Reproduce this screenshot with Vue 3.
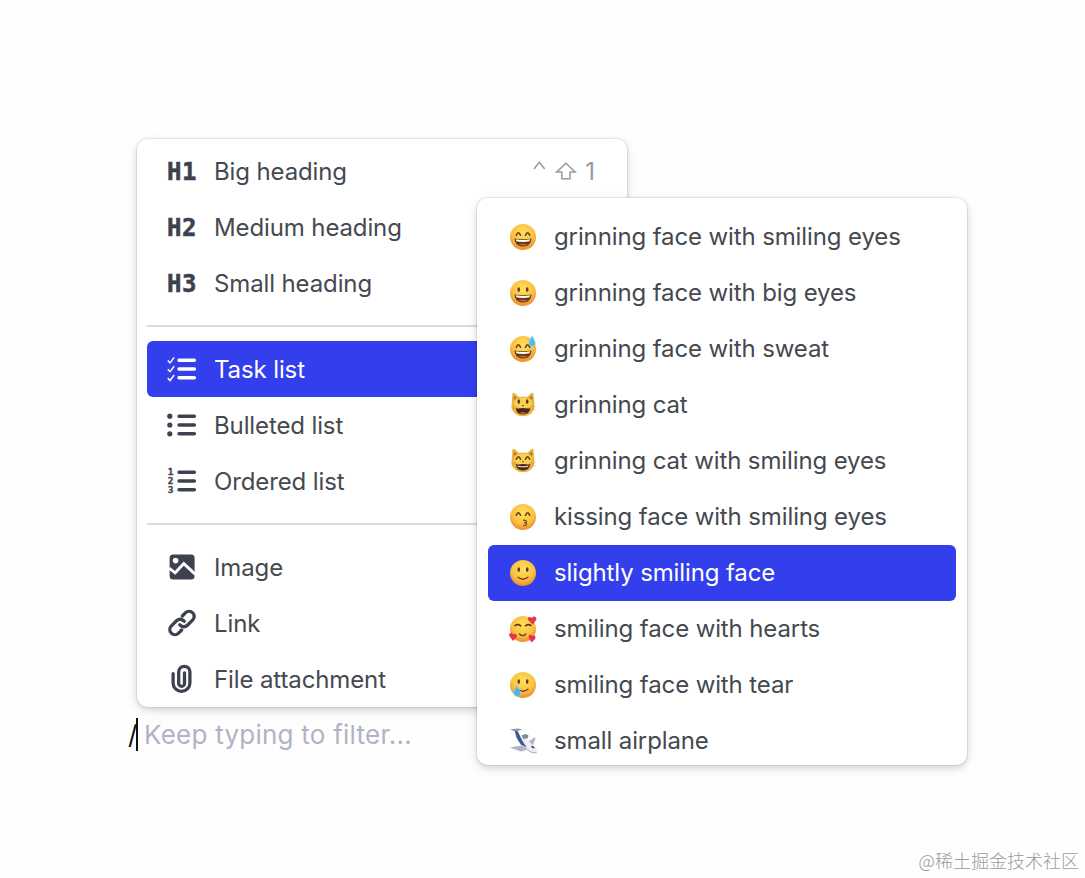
<template>
  <div class="editor">
    <div class="menu block-menu">
      <div
        v-for="item in blockList"
        :key="item.id"
        class="menu-item"
        :class="{ active: item.id === 'task', grouped: item.group }"
      >
        <span v-if="item.mark" class="heading-icon">{{ item.mark }}</span>
        <svg v-else class="block-icon" viewBox="0 0 30 30">
          <g v-if="item.id === 'task' || item.id === 'bullet' || item.id === 'ordered'">
            <path class="list-line" d="M12 6.2h15.4M12 15h15.4M12 23.8h15.4" />
            <path v-if="item.id === 'task'" class="check" d="M.8 6.5l2.2 2.4 4.2-5.5M.8 15.3l2.2 2.4 4.2-5.5M.8 24.1l2.2 2.4 4.2-5.5" />
            <g v-if="item.id === 'bullet'" fill="currentColor">
              <circle cx="2.8" cy="6.2" r="2.6" />
              <circle cx="2.8" cy="15" r="2.6" />
              <circle cx="2.8" cy="23.8" r="2.6" />
            </g>
            <g v-if="item.id === 'ordered'" class="list-number">
              <text x=".8" y="9.3">1</text>
              <text x=".8" y="18.2">2</text>
              <text x=".8" y="27.1">3</text>
            </g>
          </g>
          <g v-if="item.id === 'image'">
            <rect x="2.6" y="2.6" width="25" height="25" rx="3.5" fill="currentColor" />
            <circle cx="8.6" cy="8.6" r="2.8" fill="#fff" />
            <path d="M2 16.2l6.2 4.6 8.6-9.2L28.4 22.4" fill="none" stroke="#fff" stroke-width="2.9" />
          </g>
          <g v-if="item.id === 'link'" class="stroke-icon">
            <path d="M12.8 16.8c2.4 2.6 5.4 2.5 7.6.4l5.2-5.1c2.1-2.1 2.1-5.2.1-7.2s-5.2-2.1-7.3 0L15.3 8" />
            <path d="M17.2 13.2c-2.4-2.6-5.4-2.5-7.6-.4l-5.2 5.1c-2.1 2.1-2.1 5.2-.1 7.2s5.2 2.1 7.3 0l3.1-3.1" />
          </g>
          <path
            v-if="item.id === 'file'"
            class="stroke-icon"
            d="M6.1 9.6v9.3a8.4 8.4 0 0 0 16.8 0V8a5.6 5.6 0 0 0-11.2 0v11.4a2.9 2.9 0 0 0 5.8 0V9"
          />
        </svg>
        <span class="label">{{ item.name }}</span>
        <span v-if="item.id === 'h1'" class="shortcut">
          <svg viewBox="0 0 48 26">
            <path d="M2 10l5.3-6.8L12.7 10M24.8 12.9l9.2-8.6 9.1 8.6h-5v6.8h-8.3v-6.8z" />
          </svg>
          <span>1</span>
        </span>
      </div>
    </div>

    <div class="menu emoji-menu">
      <div
        v-for="item in emojiList"
        :key="item.id"
        class="menu-item"
        :class="{ active: item.id === 'slight' }"
      >
        <svg class="emoji" viewBox="0 0 28 28">
          <defs>
            <radialGradient :id="'skin-' + item.id" cx=".5" cy=".35" r=".68">
              <stop offset="0" stop-color="#ffe05a" />
              <stop offset=".6" stop-color="#fac241" />
              <stop offset="1" stop-color="#e9822d" />
            </radialGradient>
          </defs>

          <g v-if="item.cat">
            <path d="M3.4 3c.2-1.6 1.6-1.6 2.8-.5L10 6q4-.9 8 0l3.8-3.5c1.2-1.1 2.6-1.1 2.8.5l.8 11.6c0 6.7-4.6 10.7-11.4 10.7S2.6 21.3 2.6 14.6z" fill="#e9b43a" />
            <path d="M4.7 4.6l.2 4.6 3-2.4zM23.3 4.6l-.2 4.6-3-2.4z" fill="#b9763a" />
            <ellipse cx="14" cy="12" rx="9" ry="5.5" fill="#ffdc60" opacity=".7" />
            <path d="M6.8 17c2.6 1.3 4.6.1 7.2.1s4.6 1.2 7.2-.1c-.5 4.6-3 6.4-7.2 6.4S7.3 21.600 6.8 17z" fill="#4b271a" />
            <path v-if="item.id === 'cat-smile'" d="M8.200 18.600q5.800 1.100 11.600 0l-.8 1.500q-5 .9-10 0z" fill="#e0d3bc" />
            <path v-else d="M10.500 21.900q3.500-2 7 0-3.500 1.900-7 0z" fill="#a86358" />
            <path d="M12.900 14h2.200L14 15.500z" fill="#60371f" />
            <path class="whisker" d="M1.500 15.500l4 .8M1.500 18.800l4-.8M26.500 15.500l-4 .8M26.500 18.800l-4-.8" />
          </g>

          <g v-else-if="item.id === 'plane'">
            <!-- 机翼 -->
            <path d="M.8 20.600l12-2 6 3.800-7 2z" fill="#b0b5bf" />
            <path d="M18 15.500l7.200-5 1.400.6-2.800 7.600z" fill="#b2b7c0" />
            <!-- 机身 -->
            <path d="M5.500 3.500l3.500.8 3.600 6.200 4 .8 7.800 7.300c2.900 2.700 4.400 5.500 3.700 6.900-.9 1.600-5.300.5-8.600-1.500L11 17.500 7.500 11z" fill="#eceef2" />
            <path d="M5.500 3.500l3.300.8 3.400 7.200 2.500 4.500 3.300 4.800-6.200-3.400L7.700 11z" fill="#405a96" />
            <path d="M11 17.500l8.500 6.500c3.300 2 7.700 3.100 8.600 1.500-4 .4-8.500-1.500-12-4.900z" fill="#a3a9b5" />
            <!-- 尾翼和发动机 -->
            <path d="M.8 2.400l8-1 4.900 1-7.500 2z" fill="#8f97a6" />
            <path d="M12.500 8.200l4.500-1.300 2.500 1.700-.8 2.700-4.500.6z" fill="#828a97" />
            <path d="M22.200 18.600l2.500 1.100 1.200 1.800-3-.8z" fill="#243044" />
          </g>

          <circle v-else cx="14" cy="14" r="13" :fill="'url(#skin-' + item.id + ')'" />

          <!-- 眼睛 -->
          <g class="eyes">
            <path v-if="item.eyes === 'smile'" d="M7.3 12.2q2.1-4.8 4.2 0M16.5 12.2q2.1-4.8 4.2 0" />
            <path v-if="item.eyes === 'closed'" d="M6 10.6q3.2-2 5.8.2M16.4 10.8q2.8-2.2 5.5-.3" />
            <g v-if="item.eyes === 'dot'" fill="#623b1c" stroke="none">
              <ellipse cx="9.8" cy="10.6" rx="1.3" ry="2.4" />
              <ellipse cx="18.2" cy="10.6" rx="1.3" ry="2.4" />
            </g>
          </g>

          <!-- 嘴巴 -->
          <g v-if="item.mouth === 'open'">
            <path d="M5.4 15.4q8.6 1.5 17.2 0c-.5 5.2-3.7 8.1-8.6 8.1s-8.1-2.9-8.6-8.1z" fill="#673716" />
            <path d="M6.7 16.3q7.3 1.2 14.6 0l-.7 2q-6.6 1.2-13.2 0z" fill="#fff" />
            <path d="M9.2 21.2q4.8-1.5 9.6 0-4.8 3.2-9.6 0z" fill="#b95b35" />
          </g>
          <path v-if="item.mouth === 'smile'" class="mouth" d="M9 18.3q5 3.8 10 0" />
          <path v-if="item.mouth === 'small'" class="mouth" d="M10.5 19q3.2 3.3 6.3 0" />
          <path v-if="item.mouth === 'kiss'" class="mouth kiss" d="M14.5 17.1c4.3-.2 3.3 2.8.8 2.5 3.4.1 3 3.4-.6 2.8" />

          <path v-if="item.id === 'sweat'" d="M23.2.8c-2.5 4-3.6 5.7-3.3 8 .5 3.7 6.1 3.5 6.4-.2.1-2.4-1.3-4.2-3.1-7.8z" fill="#58b8ee" stroke="#a5defa" stroke-width=".5" />
          <path v-if="item.id === 'tear'" d="M7.2 14.8c-1.8 4.1-2.4 5.4-2.1 7.6.4 4.3 6.5 4 6.6-.1.1-2.7-2.3-5-4.5-7.5z" fill="#4bb5ee" stroke="#9edcf6" stroke-width=".5" />
          <g v-if="item.id === 'hearts'" fill="#e63748">
            <path d="M23.8 9.4l-4.5-4.2C17.5 3.2 20.4.4 23.1 3c1.7-3 5-.8 4.2 1.7z" />
            <path d="M4 26l-3.4-4.7c-1.8-2.7 2-4.7 3.4-2 2.7-1.8 4.9 1.1 3.4 3.1z" />
            <path d="M22.4 27.5l-2.6-4.9c-1.2-2.8 2.2-4 3.2-1.6 3.2-1.5 4.5 1.5 2.7 3.5z" />
          </g>
        </svg>
        <span class="label">{{ item.name }}</span>
      </div>
    </div>

    <div class="prompt">
      <span class="slash">/</span>
      <span class="caret"></span>
      <span class="placeholder">Keep typing to filter...</span>
    </div>
    <div class="watermark">@稀土掘金技术社区</div>
  </div>
</template>

<script setup>
const blockList = [
  { id: 'h1', mark: 'H1', name: 'Big heading' },
  { id: 'h2', mark: 'H2', name: 'Medium heading' },
  { id: 'h3', mark: 'H3', name: 'Small heading' },
  { id: 'task', name: 'Task list', group: true },
  { id: 'bullet', name: 'Bulleted list' },
  { id: 'ordered', name: 'Ordered list' },
  { id: 'image', name: 'Image', group: true },
  { id: 'link', name: 'Link' },
  { id: 'file', name: 'File attachment' },
]

const emojiList = [
  { id: 'grin', name: 'grinning face with smiling eyes', eyes: 'smile', mouth: 'open' },
  { id: 'big-eyes', name: 'grinning face with big eyes', eyes: 'dot', mouth: 'open' },
  { id: 'sweat', name: 'grinning face with sweat', eyes: 'smile', mouth: 'open' },
  { id: 'cat', name: 'grinning cat', eyes: 'dot', cat: true },
  { id: 'cat-smile', name: 'grinning cat with smiling eyes', eyes: 'smile', cat: true },
  { id: 'kiss', name: 'kissing face with smiling eyes', eyes: 'smile', mouth: 'kiss' },
  { id: 'slight', name: 'slightly smiling face', eyes: 'dot', mouth: 'smile' },
  { id: 'hearts', name: 'smiling face with hearts', eyes: 'closed', mouth: 'small' },
  { id: 'tear', name: 'smiling face with tear', eyes: 'dot', mouth: 'smile' },
  { id: 'plane', name: 'small airplane' },
]
</script>

<style>
body {
  margin: 0;
  background: #fefefe;
}
</style>

<style scoped>
.editor {
  position: relative;
  width: 1085px;
  height: 878px;
  overflow: hidden;
  font-family: Inter, "Liberation Sans", sans-serif;
  color: #454950;
}
.menu {
  position: absolute;
  box-sizing: border-box;
  height: 568px;
  overflow: hidden;
  border-radius: 11px;
  background: #fff;
  box-shadow: 0 0 1px 1px rgba(0, 0, 0, 0.08), 0 3px 7px rgba(0, 0, 0, 0.15), 0 4px 20px rgba(0, 0, 0, 0.04);
}
.block-menu {
  left: 137px;
  top: 139px;
  width: 490px;
  padding: 4px 10px 0;
}
.emoji-menu {
  left: 477px;
  top: 198px;
  width: 490px;
  height: 567px;
  padding: 11px 11px 0;
}
.menu-item {
  position: relative;
  display: flex;
  align-items: center;
  height: 56px;
  padding-left: 20px;
  border-radius: 6px;
  font-size: 24px;
  line-height: 30px;
  letter-spacing: -0.12px;
  white-space: nowrap;
}
.block-menu .label {
  padding-top: 1px;
}
.menu-item.active {
  background: #333fec;
  color: #fff;
}
.menu-item.grouped {
  margin-top: 30px;
}
.menu-item.grouped::before {
  content: '';
  position: absolute;
  left: 0;
  right: 0;
  top: -16px;
  height: 1.5px;
  background: #d9dcde;
}
.heading-icon {
  width: 47px;
  padding-top: 1px;
  font: bold 24px "DejaVu Sans Mono", monospace;
  letter-spacing: 0.5px;
  color: #3d414e;
  -webkit-text-stroke: 0.5px #3d414e;
}
.block-icon {
  width: 30px;
  height: 30px;
  margin-right: 17px;
  color: #3e4250;
}
.active .block-icon {
  color: #fff;
}
.list-line {
  stroke: currentColor;
  stroke-width: 3.4;
  stroke-linecap: round;
}
.check {
  fill: none;
  stroke: currentColor;
  stroke-width: 1.5;
}
.list-number {
  fill: currentColor;
  stroke: currentColor;
  stroke-width: 0.3;
  font: bold 9.5px "DejaVu Sans Mono", monospace;
  letter-spacing: 0;
}
.stroke-icon {
  fill: none;
  stroke: currentColor;
  stroke-width: 3.3;
  stroke-linecap: round;
}
.shortcut {
  display: flex;
  align-items: center;
  margin-left: auto;
  margin-right: 22px;
  padding-top: 2px;
  color: #989a9e;
}
.shortcut svg {
  width: 48px;
  height: 26px;
  margin-right: 5px;
}
.shortcut path {
  fill: none;
  stroke: currentColor;
  stroke-width: 1.5;
}
.emoji {
  width: 28px;
  height: 28px;
  margin-right: 17.5px;
}
.emoji-menu .menu-item {
  padding-left: 20.5px;
}
.eyes {
  fill: none;
  stroke: #623b1c;
  stroke-width: 1.6;
  stroke-linecap: round;
}
.mouth {
  fill: none;
  stroke: #734218;
  stroke-width: 1.4;
  stroke-linecap: round;
}
.kiss {
  stroke-width: 1.2;
}
.whisker {
  stroke: #b58b45;
  stroke-width: 0.4;
}
.prompt {
  position: absolute;
  left: 128px;
  top: 717px;
  display: flex;
  align-items: center;
  height: 34px;
  font-size: 26px;
}
.slash {
  width: 8px;
  color: #111;
}
.caret {
  width: 2px;
  height: 33px;
  margin-right: 6px;
  background: #111;
}
.placeholder {
  letter-spacing: 0.24px;
  color: #b0b4c2;
  white-space: nowrap;
}
.watermark {
  position: absolute;
  right: 6px;
  bottom: 5px;
  font: 300 18px/26px "Noto Sans CJK SC", sans-serif;
  color: #9b9b9b;
  white-space: nowrap;
}
</style>
